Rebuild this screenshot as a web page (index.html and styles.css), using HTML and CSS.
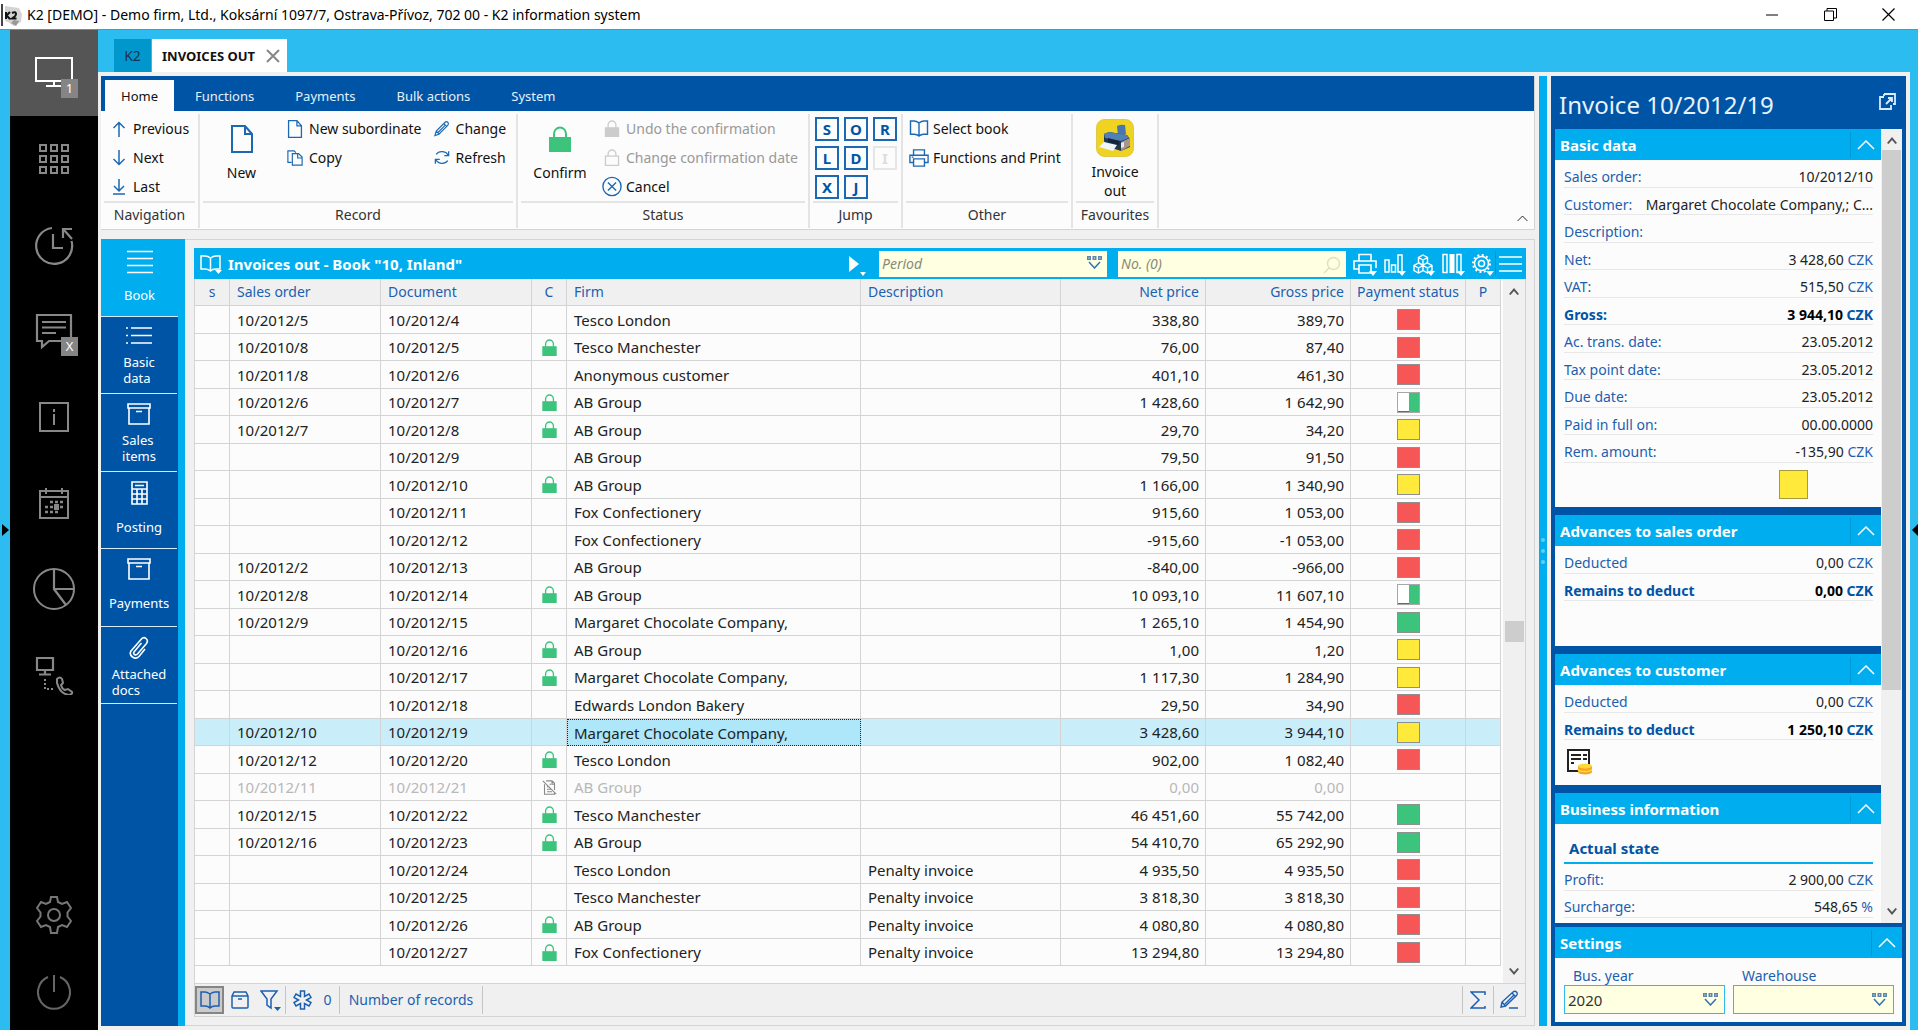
FILE: index.html
```html
<!DOCTYPE html>
<html lang="en">
<head>
<meta charset="utf-8">
<title>K2 information system</title>
<link rel="stylesheet" href="styles.css">
</head>
<body>
<svg class="defs" aria-hidden="true">
  <symbol id="lock" viewBox="0 0 22 26"><path d="M5 12V8a6 6.500 0 0 1 12 0v4" fill="none" stroke="currentColor" stroke-width="2"/><path d="M0 11h22v15H0z" fill="currentColor"/></symbol>
  <symbol id="lock-open" viewBox="0 0 22 26"><path d="M5 11V8a6 6.500 0 0 1 12 0v3M1 11h20v14H1z" fill="none" stroke="currentColor" stroke-width="2"/></symbol>
  <symbol id="doc" viewBox="0 0 22 28"><path d="M1 1h13l7 8v18H1zM14 1v8h7" fill="none" stroke="currentColor" stroke-width="2"/></symbol>
  <symbol id="copy" viewBox="0 0 18 18"><path d="M5 14H1V1h7l2 2M6 4h7l4 4v9H6zM12 4v5h5" fill="none" stroke="currentColor" stroke-width="1.300"/></symbol>
  <symbol id="pencil" viewBox="0 0 18 18"><path d="M1 17l1.500-5L12.500 2q1.500-1.500 3 0t0 3.500L5.500 15.500zM2.500 12l3.500 3.500M11 3.500l3.500 3.500M12.500 5.500l-8 8" fill="none" stroke="currentColor" stroke-width="1.300"/></symbol>
  <symbol id="refresh" viewBox="0 0 18 18"><path d="M16 7A7.500 6.500 0 0 0 2.500 5.500M16.500 2v5h-5M2 11a7.500 6.500 0 0 0 13.500 1.500M1.500 16v-5h5" fill="none" stroke="currentColor" stroke-width="1.400"/></symbol>
  <symbol id="cancel" viewBox="0 0 22 22"><circle cx="11" cy="11" r="10" fill="none" stroke="currentColor" stroke-width="1.500"/><path d="M6.500 6.500l9 9M15.500 6.500l-9 9" stroke="currentColor" stroke-width="1.500"/></symbol>
  <symbol id="book" viewBox="0 0 20 18"><path d="M10 3Q7 1 5 1H1v14h4q3 0 5 2 2-2 5-2h4V1h-4q-2 0-5 2v14" fill="none" stroke="currentColor" stroke-width="1.500"/></symbol>
  <symbol id="printer" viewBox="0 0 22 20"><path d="M5 7V1h12v6M5 15H1V7h20v8h-4M5 11h12v8H5zM3 9h2" fill="none" stroke="currentColor" stroke-width="1.500"/></symbol>
  <symbol id="box" viewBox="0 0 24 22"><path d="M1 1h22v4H1zM2 5h20v16H2zM9 8.500h6" fill="none" stroke="currentColor" stroke-width="1.600"/></symbol>
  <symbol id="chev-up" viewBox="0 0 18 10"><path d="M1 9l8-8 8 8" fill="none" stroke="currentColor" stroke-width="1.500"/></symbol>
  <symbol id="pick" viewBox="0 0 15 13"><path d="M0 0h4v4H0zM5.500 0h4v4h-4zM11 0h4v4h-4z" fill="#5d87b0"/><path d="M1.500 1.500h1v1h-1zM7 1.500h1v1H7zM12.500 1.500h1v1h-1z" fill="#ffffe1"/><path d="M2 6l5.500 6L13 6" fill="none" stroke="#2f72b5" stroke-width="1.500"/></symbol>
  <symbol id="scroll-up" viewBox="0 0 10 7"><path d="M0 6l5-6 5 6-1.500 1L5 3 1.500 7z" fill="#555"/></symbol>
  <symbol id="scroll-down" viewBox="0 0 10 7"><path d="M0 1l5 6 5-6-1.500-1L5 4 1.500 0z" fill="#555"/></symbol>
  <symbol id="storno" viewBox="0 0 18 18"><path d="M3 5v12h12v-3M5 1h7l3 3v8M12 1v4h3M6 8h3M6 11h5M6 14h6M9 5h2M1 1l16 16" fill="none" stroke="#888" stroke-width="1.300"/></symbol>
  <symbol id="part" viewBox="0 0 23 21"><path d="M0 0h23v21H0z" fill="#a8a8a8"/><path d="M1 1h11v18H1z" fill="#fff"/><path d="M1 19h11v1H1z" fill="#f03030"/><path d="M12 1h10v19H12z" fill="#3cc47c"/></symbol>
  <symbol id="gear" viewBox="0 0 36 38"><path d="M15 1h6l1 5 4 2 5-2 4 6-3.500 4.500v4L35 25l-4 6-5-2-4 2-1 6h-6l-1-6-4-2-5 2-4-6 3.500-4.500v-4L1 12l4-6 5 2 4-2z" fill="none" stroke="currentColor" stroke-width="2"/><circle cx="18" cy="19" r="6" fill="none" stroke="currentColor" stroke-width="2"/></symbol>
</svg>

<header class="titlebar">
  <svg class="app-icon" width="22" height="24" viewBox="0 0 22 24"><path d="M1 1v22" stroke="#444" stroke-width="2"/><path d="M4 3l14 2 3 6-1 8-7 4-6-4-3-1z" fill="#d4d4d4"/><path d="M13 17l5 1-3 5-5-3z" fill="#999"/><path d="M5 9v7M9 9l-3.500 3.500L9 16M11 10q4-2 4 1 0 2-4 4.500h4.500" fill="none" stroke="#111" stroke-width="2"/></svg>
  <span class="title">K2 [DEMO] - Demo firm, Ltd., Koksární 1097/7, Ostrava-Přívoz, 702 00 - K2 information system</span>
  <div class="win-buttons">
    <button aria-label="Minimize"><svg width="12" height="12" viewBox="0 0 12 12"><path d="M0 6h12" stroke="#000"/></svg></button>
    <button aria-label="Restore"><svg width="13" height="13" viewBox="0 0 13 13"><path d="M.5 3h9v9.500h-9zM3 3V.5h9.500v9.500H10" fill="none" stroke="#000"/></svg></button>
    <button aria-label="Close"><svg width="13" height="13" viewBox="0 0 13 13"><path d="M.5.5l12 12M12.500.5l-12 12" stroke="#000" stroke-width="1.200"/></svg></button>
  </div>
</header>

<div class="shell">
  <div class="edge"><svg width="7" height="12" viewBox="0 0 7 12"><path d="M0 0l7 6-7 6z"/></svg></div>
  <nav class="rail" aria-label="Modules">
    <button class="active" aria-label="Desktops"><svg width="44" height="40" viewBox="0 0 44 40"><path d="M4 5h36v23H4zM22 28v5M14 33h16" fill="none" stroke="#fff" stroke-width="2"/></svg><span class="badge">1</span></button>
    <button aria-label="Applications"><svg width="30" height="30" viewBox="0 0 30 30"><path d="M1 1h6v6H1zM12 1h6v6h-6zM23 1h6v6h-6zM1 12h6v6H1zM12 12h6v6h-6zM23 12h6v6h-6zM1 23h6v6H1zM12 23h6v6h-6zM23 23h6v6h-6z" fill="none" stroke="#888" stroke-width="2"/></svg></button>
    <button aria-label="History"><svg width="42" height="42" viewBox="0 0 42 42"><path d="M19 4a18 18 0 1 0 19.500 13M20 10v14h10M30 14V5h9M31 6l8 9" fill="none" stroke="#888" stroke-width="2.200"/></svg></button>
    <button aria-label="Messages"><svg width="44" height="42" viewBox="0 0 44 42"><path d="M5 5h34v26H17l-7 6v-6H5zM10 12h24M10 17.500h24M10 23h14" fill="none" stroke="#888" stroke-width="2.200"/></svg><span class="badge">X</span></button>
    <button aria-label="Information"><svg width="30" height="30" viewBox="0 0 30 30"><path d="M1 1h28v28H1zM15 7v3M15 12v11" fill="none" stroke="#888" stroke-width="2"/></svg></button>
    <button aria-label="Calendar"><svg width="30" height="32" viewBox="0 0 30 32"><path d="M1 4h28v27H1zM1 10h28M7 1v6M23 1v6" fill="none" stroke="#888" stroke-width="2"/><path d="M11 15h3M16 15h3M21 15h3M6 20h3M11 20h3M21 20h3M6 25h3M11 25h3M16 25h3" stroke="#888" stroke-width="2.500"/><path d="M15 17h5v6h-5z" fill="#888"/></svg></button>
    <button aria-label="Reports"><svg width="44" height="44" viewBox="0 0 44 44"><circle cx="22" cy="22" r="20" fill="none" stroke="#888" stroke-width="2"/><path d="M22 2v20h20M22 22l12 16" fill="none" stroke="#888" stroke-width="2.200"/></svg></button>
    <button aria-label="Remote support"><svg width="40" height="40" viewBox="0 0 40 40"><path d="M3 3h16v12H3zM11 15v4M5 19.500h12" fill="none" stroke="#888" stroke-width="2.200"/><path d="M11 24v10h10" fill="none" stroke="#888" stroke-width="2" stroke-dasharray="2 2"/><path d="M23 24q3-3 5 0l1 4-2 2q1 4 4 5l3-1 4 3q1 2-3 3-9-1-12-12z" fill="none" stroke="#888" stroke-width="2"/></svg></button>
    <span class="spacer"></span>
    <button class="low" aria-label="Settings"><svg width="36" height="38" color="#777"><use href="#gear"/></svg></button>
    <button class="low" aria-label="Exit"><svg width="34" height="36" viewBox="0 0 34 36"><path d="M11 3a16 16.500 0 1 0 12 0M17 1v17" fill="none" stroke="#666" stroke-width="2"/></svg></button>
  </nav>

  <div class="main">
    <div class="tabs">
      <a class="tab-k2" href="#k2">K2</a>
      <a class="tab-open" href="#invoices">INVOICES OUT <svg width="14" height="14" viewBox="0 0 14 14"><path d="M1 1l12 12M13 1L1 13" stroke="#888" stroke-width="2"/></svg></a>
    </div>
    <div class="workspace">
      <div class="left">
        <section class="ribbon">
          <div class="ribbon-tabs">
            <button class="on">Home</button><button>Functions</button><button>Payments</button><button>Bulk actions</button><button>System</button>
          </div>
          <div class="ribbon-body">
            <div class="group g-nav">
              <div class="tools"><div class="stack">
                <button><svg width="14" height="16" viewBox="0 0 14 16"><path d="M7 16V1.500M1.500 7L7 1.500 12.500 7" fill="none" stroke="currentColor" stroke-width="1.500"/></svg>Previous</button>
                <button><svg width="14" height="16" viewBox="0 0 14 16"><path d="M7 0v14.500M1.500 9L7 14.500 12.500 9" fill="none" stroke="currentColor" stroke-width="1.500"/></svg>Next</button>
                <button><svg width="14" height="16" viewBox="0 0 14 16"><path d="M7 0v12M2 7l5 5 5-5M1 15h12" fill="none" stroke="currentColor" stroke-width="1.500"/></svg>Last</button>
              </div></div>
              <p>Navigation</p>
            </div>
            <div class="group g-record">
              <div class="tools">
                <button class="big"><svg width="22" height="28"><use href="#doc"/></svg>New</button>
                <div class="stack">
                  <button><svg width="16" height="18"><use href="#doc"/></svg>New subordinate</button>
                  <button><svg width="16" height="18"><use href="#copy"/></svg>Copy</button>
                </div>
                <div class="stack">
                  <button><svg width="16" height="17"><use href="#pencil"/></svg>Change</button>
                  <button><svg width="16" height="17"><use href="#refresh"/></svg>Refresh</button>
                </div>
              </div>
              <p>Record</p>
            </div>
            <div class="group g-status">
              <div class="tools">
                <button class="big confirm"><svg width="22" height="26"><use href="#lock"/></svg>Confirm</button>
                <div class="stack">
                  <button disabled><svg width="20" height="17"><use href="#lock"/></svg>Undo the confirmation</button>
                  <button disabled><svg width="20" height="17"><use href="#lock-open"/></svg>Change confirmation date</button>
                  <button><svg width="20" height="21"><use href="#cancel"/></svg>Cancel</button>
                </div>
              </div>
              <p>Status</p>
            </div>
            <div class="group g-jump">
              <div class="tools jump"><button>S</button><button>O</button><button>R</button><button>L</button><button>D</button><button disabled>I</button><button>X</button><button>J</button></div>
              <p>Jump</p>
            </div>
            <div class="group g-other">
              <div class="tools"><div class="stack">
                <button><svg width="20" height="17"><use href="#book"/></svg>Select book</button>
                <button><svg width="20" height="20"><use href="#printer"/></svg>Functions and Print</button>
              </div></div>
              <p>Other</p>
            </div>
            <div class="group g-fav">
              <div class="tools">
                <button class="big"><svg width="38" height="38" viewBox="0 0 38 38"><rect x=".5" y=".5" width="37" height="37" rx="8" fill="#f0d321" stroke="#e0c84a"/><path d="M21 7q4-2 8-1l1 9-8 2z" fill="#4a76ad"/><path d="M8 15l5-2 18 3 3 4v8l-9 4-15-5-2-5z" fill="#22364f"/><path d="M8 15l5-2 18 3 2 3-8 3-16-3z" fill="#4f80b8"/><path d="M25 23l9-4v8l-9 5z" fill="#a8968a"/><path d="M25 24l3-1v5l-3 1z" fill="#e8e8e8"/><path d="M3 28l5-5 13 3-4 6z" fill="#eef6fb"/><path d="M12 19l11 3v4l-11-3z" fill="#16243a"/></svg><span>Invoice<br>out</span></button>
              </div>
              <p>Favourites</p>
            </div>
            <button class="collapse" aria-label="Collapse ribbon"><svg width="11" height="7"><use href="#chev-up"/></svg></button>
          </div>
        </section>

        <div class="lower">
          <nav class="pages">
            <button class="on"><svg width="26" height="24" viewBox="0 0 26 24"><path d="M0 1.500h26M0 8.500h26M0 15.500h26M0 22.500h26" stroke="#fff" stroke-width="1.500"/></svg><span>Book</span></button>
            <button><svg width="26" height="20" viewBox="0 0 26 20"><path d="M5 2h21M5 9.500h21M5 17h21M0 2h2M0 9.500h2M0 17h2" stroke="#fff" stroke-width="1.500"/></svg><span>Basic<br>data</span></button>
            <button><svg width="24" height="22"><use href="#box"/></svg><span>Sales<br>items</span></button>
            <button><svg width="17" height="24" viewBox="0 0 17 24"><path d="M1 1h15v22H1zM1 8h15M1 13h15M1 18h15M6 8v15M11 8v15M4 4.500h9" fill="none" stroke="#fff" stroke-width="1.600"/></svg><span>Posting</span></button>
            <button><svg width="24" height="22"><use href="#box"/></svg><span>Payments</span></button>
            <button><svg width="22" height="24" viewBox="0 0 22 24"><path d="M17 13l-6 7.500q-3 3-6.500.5t-1.500-6L13 3.500q2.500-3 5-1t.5 5L9.500 18q-1.500 1.500-3 .5T6 16l7.500-9" fill="none" stroke="#fff" stroke-width="1.600"/></svg><span>Attached<br>docs</span></button>
          </nav>

          <section class="grid">
            <div class="grid-head">
              <svg class="bookico" width="22" height="20" viewBox="0 0 22 20"><path d="M10.500 3Q8 1 5 1H1v13h4q3 0 5.500 2 2-2 5-2H20V1h-4q-3 0-5.500 2v13" fill="none" stroke="#fff" stroke-width="1.500"/><path d="M15 15h7l-3.500 4z" fill="#fff"/></svg>
              <h1>Invoices out - Book "10, Inland"</h1>
              <svg class="play" width="17" height="22" viewBox="0 0 17 22"><path d="M0 2l10 8-10 8zM11 18h6l-3 4z" fill="#fff"/></svg>
              <label class="field"><input type="text" placeholder="Period" aria-label="Period"><svg width="15" height="13"><use href="#pick"/></svg></label>
              <label class="field"><input type="search" placeholder="No. (0)" aria-label="Number"><svg width="18" height="18" viewBox="0 0 18 18"><circle cx="10.500" cy="7.500" r="6" fill="none" stroke="#e0dfc0" stroke-width="1.500"/><path d="M6 12l-5 5" stroke="#e0dfc0" stroke-width="1.500"/></svg></label>
              <div class="head-tools">
                <button aria-label="Print"><svg width="24" height="24" viewBox="0 0 24 24"><path d="M6 8V1.500h12V8M6 16H1V8h22v7M6 12h12v8H6z" fill="none" stroke="#fff" stroke-width="1.600"/><path d="M16 18h8l-4 5z" fill="#fff"/></svg></button>
                <button aria-label="Chart"><svg width="22" height="24" viewBox="0 0 22 24"><path d="M1 7h4v12H1zM7.500 12h4v7h-4zM14 2h4v17h-4z" fill="none" stroke="#fff" stroke-width="1.500"/><path d="M14 18h8l-4 5z" fill="#fff"/></svg></button>
                <button aria-label="Cubes"><svg width="22" height="24" viewBox="0 0 22 24"><path d="M10 2l4.500 2.500v5L10 12 5.500 9.500v-5zM5.500 4.500L10 7l4.500-2.500M10 7v5M5.500 10l4.500 2.500v5L5.500 20 1 17.500v-5zM1 12.500L5.500 15l4.500-2.500 4.500 2.500 4.500-2.500M5.500 15v5M14.500 10l4.500 2.500v5L14.500 20 10 17.500M14.500 15v5" fill="none" stroke="#fff" stroke-width="1.400"/><path d="M14 18h8l-4 5z" fill="#fff"/></svg></button>
                <button aria-label="Columns"><svg width="23" height="24" viewBox="0 0 23 24"><path d="M1 1.500h4v18H1zM15 1.500h4v18h-4z" fill="none" stroke="#fff" stroke-width="1.500"/><path d="M7.500 1h5v19h-5zM15 18h8l-4 5z" fill="#fff"/></svg></button>
                <button aria-label="Options"><svg width="23" height="24" viewBox="0 0 23 24"><circle cx="9.500" cy="10.500" r="7" fill="none" stroke="#fff" stroke-width="1.500"/><circle cx="9.500" cy="10.500" r="8.500" fill="none" stroke="#fff" stroke-width="2" stroke-dasharray="2 2.450"/><circle cx="9.500" cy="10.500" r="3" fill="none" stroke="#fff" stroke-width="1.500"/><path d="M14 18h8l-4 5z" fill="#fff"/></svg></button>
                <button class="menu" aria-label="Menu"><svg width="23" height="24" viewBox="0 0 23 24"><path d="M0 5h23M0 12h23M0 19h23" stroke="#fff" stroke-width="1.500"/></svg></button>
              </div>
            </div>

            <div class="grid-body">
              <div class="table-wrap">
              <table>
                <colgroup><col class="w-s"><col class="w-doc"><col class="w-doc"><col class="w-s"><col class="w-firm"><col><col class="w-num"><col class="w-num"><col class="w-pay"><col class="w-s"></colgroup>
                <thead><tr><th class="c">s</th><th>Sales order</th><th>Document</th><th class="c">C</th><th>Firm</th><th>Description</th><th class="r">Net price</th><th class="r">Gross price</th><th class="c">Payment status</th><th class="c">P</th></tr></thead>
                <tbody>
                <tr><td></td><td>10/2012/5</td><td>10/2012/4</td><td></td><td>Tesco London</td><td></td><td>338,80</td><td>389,70</td><td><i class="sq red"></i></td><td></td></tr>
                <tr><td></td><td>10/2010/8</td><td>10/2012/5</td><td><svg><use href="#lock"/></svg></td><td>Tesco Manchester</td><td></td><td>76,00</td><td>87,40</td><td><i class="sq red"></i></td><td></td></tr>
                <tr><td></td><td>10/2011/8</td><td>10/2012/6</td><td></td><td>Anonymous customer</td><td></td><td>401,10</td><td>461,30</td><td><i class="sq red"></i></td><td></td></tr>
                <tr><td></td><td>10/2012/6</td><td>10/2012/7</td><td><svg><use href="#lock"/></svg></td><td>AB Group</td><td></td><td>1 428,60</td><td>1 642,90</td><td><svg class="part"><use href="#part"/></svg></td><td></td></tr>
                <tr><td></td><td>10/2012/7</td><td>10/2012/8</td><td><svg><use href="#lock"/></svg></td><td>AB Group</td><td></td><td>29,70</td><td>34,20</td><td><i class="sq yellow"></i></td><td></td></tr>
                <tr><td></td><td></td><td>10/2012/9</td><td></td><td>AB Group</td><td></td><td>79,50</td><td>91,50</td><td><i class="sq red"></i></td><td></td></tr>
                <tr><td></td><td></td><td>10/2012/10</td><td><svg><use href="#lock"/></svg></td><td>AB Group</td><td></td><td>1 166,00</td><td>1 340,90</td><td><i class="sq yellow"></i></td><td></td></tr>
                <tr><td></td><td></td><td>10/2012/11</td><td></td><td>Fox Confectionery</td><td></td><td>915,60</td><td>1 053,00</td><td><i class="sq red"></i></td><td></td></tr>
                <tr><td></td><td></td><td>10/2012/12</td><td></td><td>Fox Confectionery</td><td></td><td>-915,60</td><td>-1 053,00</td><td><i class="sq red"></i></td><td></td></tr>
                <tr><td></td><td>10/2012/2</td><td>10/2012/13</td><td></td><td>AB Group</td><td></td><td>-840,00</td><td>-966,00</td><td><i class="sq red"></i></td><td></td></tr>
                <tr><td></td><td>10/2012/8</td><td>10/2012/14</td><td><svg><use href="#lock"/></svg></td><td>AB Group</td><td></td><td>10 093,10</td><td>11 607,10</td><td><svg class="part"><use href="#part"/></svg></td><td></td></tr>
                <tr><td></td><td>10/2012/9</td><td>10/2012/15</td><td></td><td>Margaret Chocolate Company,</td><td></td><td>1 265,10</td><td>1 454,90</td><td><i class="sq green"></i></td><td></td></tr>
                <tr><td></td><td></td><td>10/2012/16</td><td><svg><use href="#lock"/></svg></td><td>AB Group</td><td></td><td>1,00</td><td>1,20</td><td><i class="sq yellow"></i></td><td></td></tr>
                <tr><td></td><td></td><td>10/2012/17</td><td><svg><use href="#lock"/></svg></td><td>Margaret Chocolate Company,</td><td></td><td>1 117,30</td><td>1 284,90</td><td><i class="sq yellow"></i></td><td></td></tr>
                <tr><td></td><td></td><td>10/2012/18</td><td></td><td>Edwards London Bakery</td><td></td><td>29,50</td><td>34,90</td><td><i class="sq red"></i></td><td></td></tr>
                <tr class="selected"><td></td><td>10/2012/10</td><td>10/2012/19</td><td></td><td class="focus">Margaret Chocolate Company,</td><td></td><td>3 428,60</td><td>3 944,10</td><td><i class="sq yellow"></i></td><td></td></tr>
                <tr><td></td><td>10/2012/12</td><td>10/2012/20</td><td><svg><use href="#lock"/></svg></td><td>Tesco London</td><td></td><td>902,00</td><td>1 082,40</td><td><i class="sq red"></i></td><td></td></tr>
                <tr class="void"><td></td><td>10/2012/11</td><td>10/2012/21</td><td><svg><use href="#storno"/></svg></td><td>AB Group</td><td></td><td>0,00</td><td>0,00</td><td></td><td></td></tr>
                <tr><td></td><td>10/2012/15</td><td>10/2012/22</td><td><svg><use href="#lock"/></svg></td><td>Tesco Manchester</td><td></td><td>46 451,60</td><td>55 742,00</td><td><i class="sq green"></i></td><td></td></tr>
                <tr><td></td><td>10/2012/16</td><td>10/2012/23</td><td><svg><use href="#lock"/></svg></td><td>AB Group</td><td></td><td>54 410,70</td><td>65 292,90</td><td><i class="sq green"></i></td><td></td></tr>
                <tr><td></td><td></td><td>10/2012/24</td><td></td><td>Tesco London</td><td>Penalty invoice</td><td>4 935,50</td><td>4 935,50</td><td><i class="sq red"></i></td><td></td></tr>
                <tr><td></td><td></td><td>10/2012/25</td><td></td><td>Tesco Manchester</td><td>Penalty invoice</td><td>3 818,30</td><td>3 818,30</td><td><i class="sq red"></i></td><td></td></tr>
                <tr><td></td><td></td><td>10/2012/26</td><td><svg><use href="#lock"/></svg></td><td>AB Group</td><td>Penalty invoice</td><td>4 080,80</td><td>4 080,80</td><td><i class="sq red"></i></td><td></td></tr>
                <tr><td></td><td></td><td>10/2012/27</td><td><svg><use href="#lock"/></svg></td><td>Fox Confectionery</td><td>Penalty invoice</td><td>13 294,80</td><td>13 294,80</td><td><i class="sq red"></i></td><td></td></tr>
                </tbody>
              </table>
              </div>
              <div class="scroll"><svg width="10" height="7"><use href="#scroll-up"/></svg><i class="thumb"></i><svg width="10" height="7"><use href="#scroll-down"/></svg></div>
            </div>

            <footer class="statusbar">
              <button class="pressed" aria-label="Book view"><svg width="20" height="18"><use href="#book"/></svg></button>
              <button aria-label="Container"><svg width="18" height="18" viewBox="0 0 18 18"><path d="M1 5l2-4h12l2 4v11q0 1-1 1H2q-1 0-1-1zM1 5h16M7 8h4" fill="none" stroke="currentColor" stroke-width="1.500"/></svg></button>
              <button class="ruled" aria-label="Filter"><svg width="21" height="22" viewBox="0 0 21 22"><path d="M1 2h16l-6 8v9l-4-3v-6z" fill="none" stroke="currentColor" stroke-width="1.500"/><path d="M14 18h7l-3.500 4z" fill="currentColor"/></svg></button>
              <button class="stars ruled"><svg width="19" height="20" viewBox="0 0 19 20"><path d="M7.500 1h4v5.500L16 4l2 3.500-4.500 2.500 4.500 2.500L16 16l-4.500-2.500V19h-4v-5.500L3 16l-2-3.500L5.500 10 1 7.500 3 4l4.500 2.500z" fill="none" stroke="currentColor" stroke-width="1.500"/></svg>0</button>
              <button class="records ruled">Number of records</button>
              <span class="spacer ruled"></span>
              <button class="ruled" aria-label="Sum"><svg width="16" height="18" viewBox="0 0 16 18"><path d="M15 4V1H1l8 8-8 8h14v-2" fill="none" stroke="currentColor" stroke-width="1.500"/></svg></button>
              <button aria-label="Edit"><svg width="19" height="20" viewBox="0 0 19 20"><path d="M1 17l1-5L13 2q2-1.500 3.500 0t0 3.500L5.500 16zM2 12l3.500 4M12 3l4 4M14 5l-9 9M9 18h9" fill="none" stroke="currentColor" stroke-width="1.400"/></svg></button>
            </footer>
          </section>
        </div>
      </div>

      <div class="splitter"><i></i><i></i><i></i></div>

      <aside class="preview">
        <div class="preview-title"><h2>Invoice 10/2012/19</h2><a href="#open" aria-label="Open in window"><svg width="17" height="17" viewBox="0 0 17 17"><path d="M5 4H1v12h11v-4M5 1h11v10h-2M5 1v2M7 11l6-6M9 5h4v4" fill="none" stroke="#dcecff" stroke-width="1.800"/></svg></a></div>
        <div class="preview-body">
          <div class="cards">
            <section class="card basic">
              <h3>Basic data<button aria-label="Collapse"><svg width="18" height="10"><use href="#chev-up"/></svg></button></h3>
              <dl>
                <div><dt>Sales order:</dt><dd>10/2012/10</dd></div>
                <div><dt>Customer:</dt><dd>Margaret Chocolate Company,; C...</dd></div>
                <div><dt>Description:</dt><dd></dd></div>
                <div><dt>Net:</dt><dd>3 428,60 <em>CZK</em></dd></div>
                <div><dt>VAT:</dt><dd>515,50 <em>CZK</em></dd></div>
                <div class="strong"><dt>Gross:</dt><dd>3 944,10 <em>CZK</em></dd></div>
                <div><dt>Ac. trans. date:</dt><dd>23.05.2012</dd></div>
                <div><dt>Tax point date:</dt><dd>23.05.2012</dd></div>
                <div><dt>Due date:</dt><dd>23.05.2012</dd></div>
                <div><dt>Paid in full on:</dt><dd>00.00.0000</dd></div>
                <div><dt>Rem. amount:</dt><dd>-135,90 <em>CZK</em></dd></div>
              </dl>
              <i class="status-square"></i>
            </section>
            <section class="card advance">
              <h3>Advances to sales order<button aria-label="Collapse"><svg width="18" height="10"><use href="#chev-up"/></svg></button></h3>
              <dl>
                <div><dt>Deducted</dt><dd>0,00 <em>CZK</em></dd></div>
                <div class="strong"><dt>Remains to deduct</dt><dd>0,00 <em>CZK</em></dd></div>
              </dl>
            </section>
            <section class="card advance">
              <h3>Advances to customer<button aria-label="Collapse"><svg width="18" height="10"><use href="#chev-up"/></svg></button></h3>
              <dl>
                <div><dt>Deducted</dt><dd>0,00 <em>CZK</em></dd></div>
                <div class="strong"><dt>Remains to deduct</dt><dd>1 250,10 <em>CZK</em></dd></div>
              </dl>
              <svg class="coins" width="25" height="26" viewBox="0 0 25 26"><path d="M1 1h21v21H1z" fill="#fff" stroke="#222" stroke-width="2"/><path d="M4 6h10M16 6h4M4 10h10M16 10h4M4 14h3" stroke="#222" stroke-width="2"/><path d="M11 17v6a7 2.500 0 0 0 14 0v-6z" fill="#f5a623"/><ellipse cx="18" cy="17" rx="7" ry="2.500" fill="#ffd83a"/><path d="M11 20a7 2.500 0 0 0 14 0" fill="none" stroke="#ffd83a" stroke-width="1.500"/></svg>
            </section>
            <section class="card business">
              <h3>Business information<button aria-label="Collapse"><svg width="18" height="10"><use href="#chev-up"/></svg></button></h3>
              <h4>Actual state</h4>
              <dl>
                <div><dt>Profit:</dt><dd>2 900,00 <em>CZK</em></dd></div>
                <div><dt>Surcharge:</dt><dd>548,65 <em>%</em></dd></div>
              </dl>
            </section>
          </div>
          <div class="scroll side"><svg width="10" height="7"><use href="#scroll-up"/></svg><i class="thumb"></i><svg width="10" height="7"><use href="#scroll-down"/></svg></div>
        </div>
        <section class="card settings">
          <h3>Settings<button aria-label="Collapse"><svg width="18" height="10"><use href="#chev-up"/></svg></button></h3>
          <div class="settings-fields">
            <div><label for="year">Bus. year</label><div class="combo"><input id="year" type="text" value="2020"><svg width="15" height="13"><use href="#pick"/></svg></div></div>
            <div><label for="wh">Warehouse</label><div class="combo"><input id="wh" type="text"><svg width="15" height="13"><use href="#pick"/></svg></div></div>
          </div>
        </section>
      </aside>
    </div>
  </div>
  <div class="edge right"><svg width="6" height="12" viewBox="0 0 6 12"><path d="M6 0L0 6l6 6z"/></svg></div>
</div>
</body>
</html>
```

FILE: styles.css
```css
:root {
  --navy: #0054a6;
  --cyan: #00aeef;
  --sky: #2cbcf0;
  --link: #1c5fb0;
  --paper: #fcfcfc;
  --line: #d4d4d4;
}
* { box-sizing: border-box; }
body {
  margin: 0;
  height: 100vh;
  display: flex;
  flex-direction: column;
  overflow: hidden;
  font: 14px/20px "Noto Sans", "Open Sans", sans-serif;
  color: #222;
}
h1, h2, h3, h4, p, dl, dd { margin: 0; }
button {
  border: 0;
  padding: 0;
  background: none;
  color: inherit;
  font: inherit;
  white-space: nowrap;
}
a { color: inherit; text-decoration: none; }
svg { flex: none; display: block; }
em { font-style: normal; }
.defs { position: absolute; width: 0; height: 0; }
.spacer { flex: 1; }

/* window title */
.titlebar {
  flex: none;
  height: 29px;
  display: flex;
  align-items: center;
  background: #fff;
  color: #000;
}
.app-icon { margin: 0 4px 0 1px; }
.title { flex: 1; font-size: 14px; }
.win-buttons { display: flex; padding-right: 1px; }
.win-buttons button { width: 58px; height: 29px; display: grid; place-items: center; }

.shell { flex: 1; min-height: 0; display: flex; background: var(--sky); border-top: 1px solid #2aa6d2; }
.edge { width: 10px; display: flex; align-items: center; justify-content: center; }
.edge.right { width: 8px; justify-content: flex-end; }

/* module rail */
.rail { width: 88px; display: flex; flex-direction: column; background: #000; }
.rail button { position: relative; height: 86px; display: grid; place-items: center; }
.rail .active { background: #555; }
.rail .low { height: 77px; }
.badge {
  position: absolute;
  left: 51px;
  top: 49px;
  width: 17px;
  height: 19px;
  background: #858585;
  color: #fff;
  font-size: 13px;
  line-height: 19px;
}

.main { flex: 1; min-width: 0; display: flex; flex-direction: column; }
.tabs { flex: none; height: 42px; display: flex; align-items: flex-end; padding-left: 16px; gap: 1px; }
.tabs a { height: 33px; display: flex; align-items: center; justify-content: center; }
.tab-k2 { width: 37px; background: #0098cc; color: #1a3050; }
.tab-open { padding: 0 7px 0 10px; gap: 11px; background: #fff; color: #111; font-weight: bold; font-size: 13px; }
.workspace {
  flex: 1;
  min-height: 0;
  display: flex;
  gap: 4px;
  padding: 4px 4px 4px 3px;
  background: #f0f0f0;
}
.left { flex: 1; min-width: 0; display: flex; flex-direction: column; gap: 9px; }

/* ribbon */
.ribbon { border-bottom: 1px solid var(--line); border-right: 1px solid var(--line); }
.ribbon-tabs { height: 35px; padding: 4px 0 0 4px; display: flex; background: var(--navy); color: #e6f0fa; font-size: 13px; }
.ribbon-tabs button { height: 31px; padding: 0 20px; margin-right: 1px; }
.ribbon-tabs .on { padding: 0 16px; background: var(--paper); color: #111; }
.ribbon-body { display: flex; padding: 3px 0 1px; background: var(--paper); color: #111; }
.group { flex: none; display: flex; flex-direction: column; padding: 0 3px; border-right: 2px solid #e4e4e4; }
.group p { border-top: 2px solid #e4e4e4; padding: 2px 0 3px; text-align: center; color: #333; }
.tools { height: 87px; display: flex; }
.tools svg { color: #1b68b3; }
.stack { display: flex; flex-direction: column; }
.stack button { height: 29px; display: flex; align-items: center; gap: 6px; }
.stack button:disabled { color: #999; }
.stack button:disabled svg { color: #ccc; }
.big { display: flex; flex-direction: column; align-items: center; line-height: 19px; }
.big svg { margin: 11px 0 10px; }
.big.confirm svg { color: #3cc47c; margin: 12px 0 11px; }
.g-nav { width: 99px; }
.g-nav .tools { padding-left: 8px; }
.g-nav .stack button { gap: 7px; }
.g-record { width: 318px; }
.g-record .big { width: 77px; }
.g-record .stack { margin-left: 7px; }
.g-record .stack + .stack { margin-left: 12px; }
.g-status { width: 292px; }
.g-status .big { width: 78px; }
.g-status .stack { margin-left: 3px; }
.g-status .stack button { gap: 4px; }
.g-jump { width: 93px; }
.jump { display: grid; grid-template-columns: repeat(3, 24px); grid-auto-rows: 24px; gap: 5px; align-content: start; padding: 3px 2px; }
.jump button { border: 2px solid #1b68b3; color: #0054a6; font-weight: bold; font-size: 15px; line-height: 20px; }
.jump button:disabled { border-color: #e6e6e6; color: #ddd; }
.g-other { width: 170px; }
.g-other .tools { padding-left: 3px; }
.g-other .stack button { gap: 4px; }
.g-fav { width: 86px; }
.g-fav .tools { justify-content: center; }
.g-fav .big svg { margin: 5px 0; }
.collapse { margin: auto 6px 6px auto; }

/* lower frame */
.lower {
  flex: 1;
  min-height: 0;
  display: flex;
  gap: 9px;
  padding: 0 8px 8px 0;
  border: 1px solid var(--line);
  border-left: 0;
}
.pages {
  width: 84px;
  margin: -1px 0 -9px;
  padding-right: 7px;
  background: linear-gradient(to left, var(--cyan) 7px, var(--navy) 7px);
  color: #fff;
  font-size: 13px;
}
.pages button {
  width: 76px;
  height: 78px;
  display: flex;
  flex-direction: column;
  align-items: center;
  border-bottom: 1px solid #d6ecfa;
  padding: 9px 0 0;
  line-height: 16px;
}
.pages button:nth-child(even) { height: 77px; }
.pages span { margin: auto 0; text-align: left; }
.pages .on { width: 77px; background: var(--cyan); padding-top: 11px; }

/* data grid */
.grid { flex: 1; min-width: 0; margin-top: 8px; display: flex; flex-direction: column; border: 1px solid var(--line); border-top: 0; }
.grid-head { flex: none; height: 31px; margin: 0 -1px; display: flex; align-items: center; background: var(--cyan); }
.bookico { margin: 3px 6px 0 6px; }
.grid-head h1 { flex: 1; color: #fff; font-size: 15px; line-height: 24px; }
.play { margin: 3px 13px 0 0; }
.field { position: relative; width: 228px; height: 26px; margin-right: 11px; }
.field + .field { margin-right: 7px; }
.field input { width: 100%; height: 100%; border: 0; padding: 0 3px; background: #ffffe1; font: italic 14px "Noto Sans", sans-serif; }
.field input::placeholder { color: #8a8a7a; opacity: 1; }
.field svg { position: absolute; right: 5px; top: 5px; }
.head-tools { display: flex; gap: 7px; padding-right: 4px; }
.head-tools button { padding-top: 2px; }
.head-tools .menu { padding: 0 0 0 3px; margin-left: -7px; border-left: 1px solid #0098d4; }
.grid-body { flex: 1; min-height: 0; display: flex; background: var(--paper); }
.table-wrap { flex: 1; min-width: 0; padding-right: 2px; }
table { width: 100%; table-layout: fixed; border-collapse: separate; border-spacing: 0; }
th, td {
  padding: 0 6px 0 7px;
  border-right: 1px solid var(--line);
  border-bottom: 1px solid var(--line);
  text-align: left;
  white-space: nowrap;
  overflow: hidden;
}
th { height: 27px; background: #f0f0f0; color: var(--link); font-weight: normal; font-size: 14px; }
th.c { padding: 0; text-align: center; }
th.r, td:nth-child(7), td:nth-child(8) { text-align: right; }
td { height: 28px; font-size: 15px; }
tr:nth-child(even) td { height: 27px; }
td svg { width: 15px; height: 17px; margin: 0 auto; color: #3cc47c; }
td:nth-child(4) { padding: 0; }
.sq, .part { display: block; width: 23px; height: 21px; margin: 0 auto; }
.sq { border: 1px solid #8f8f8f; }
.red { background: #f65656; }
.yellow { background: #ffe93b; }
.green { background: #3cc47c; }
.w-s { width: 35px; }
.w-doc { width: 151px; }
.w-firm { width: 294px; }
.w-num { width: 145px; }
.w-pay { width: 115px; }
.selected td { background: #c9eefa; }
.selected .focus { background: #aee6fa; border: 1px dotted #222; padding: 0 6px; }
.void td { color: #b8b8b8; }

.scroll { width: 22px; display: flex; flex-direction: column; align-items: center; justify-content: space-between; padding: 9px 0 8px; background: #f0f0f0; }
.thumb { width: 19px; height: 21px; background: #cdcdcd; }

.statusbar { flex: none; height: 33px; display: flex; align-items: center; border-top: 1px solid var(--line); color: var(--link); }
.statusbar button, .statusbar .spacer { height: 28px; display: flex; align-items: center; justify-content: center; }
.statusbar button { width: 31px; }
.statusbar .pressed { width: 29px; border: 2px solid #858585; background: #cbcbcb; }
.statusbar .ruled { border-right: 1px solid #c4c4c4; }
.statusbar .stars { width: 54px; gap: 11px; }
.statusbar .records { width: 143px; }

.splitter { width: 8px; display: flex; flex-direction: column; align-items: center; justify-content: center; gap: 7px; background: var(--cyan); }
.splitter i { width: 4px; height: 4px; border-radius: 2px; background: #66cdf5; }

/* preview panel */
.preview { width: 355px; padding: 0 4px 4px; display: flex; flex-direction: column; gap: 4px; background: var(--navy); }
.preview-title { flex: none; height: 49px; display: flex; align-items: center; justify-content: space-between; padding: 9px 6px 0 4px; color: #e8f2fc; }
.preview-title h2 { font-weight: normal; font-size: 24px; line-height: 32px; }
.preview-title a { padding-bottom: 8px; }
.preview-body { flex: 1; min-height: 0; display: flex; }
.cards { flex: 1; min-width: 0; display: flex; flex-direction: column; gap: 8px; overflow: hidden; }
.card { flex: none; background: var(--paper); }
.card h3 { height: 31px; display: flex; align-items: center; justify-content: space-between; padding-left: 5px; background: var(--cyan); color: #fff; font-size: 15px; }
.card h3 button { width: 31px; height: 26px; display: grid; place-items: center; border-left: 1px solid #0098d4; }
.basic { height: 378px; }
.advance { height: 131px; }
.card dl { padding: 0 8px 0 9px; }
.card dl div { height: 28px; display: flex; align-items: center; gap: 8px; border-bottom: 1px solid #e8e8e8; padding-top: 7px; }
.card dl div:nth-child(even) { height: 27px; }
dt, dd em { color: var(--link); }
dd { flex: 1; min-width: 0; white-space: nowrap; text-align: right; }
.strong, .strong em, .strong dt { font-weight: bold; }
.strong em, .strong dt { color: var(--navy); }
.strong dd { color: #000; }
.status-square { display: block; width: 29px; height: 29px; margin: 7px 0 0 224px; border: 1px solid #a59b3a; background: #ffe93b; }
.coins { margin: 9px 0 0 12px; }
.card.business { flex: 1; }
.business h4 { margin: 0 8px 0 9px; padding: 14px 5px 4px; border-bottom: 2px solid var(--cyan); color: var(--navy); font-size: 15px; line-height: 20px; }
.card.business dl div { height: 27px; padding-top: 5px; }
.scroll.side { width: 21px; justify-content: flex-start; padding-top: 8px; }
.side .thumb { flex: 1; margin: 6px 0 218px; }
.settings { padding-bottom: 8px; }
.settings-fields { display: flex; gap: 8px; padding: 9px 8px 0 9px; }
.settings-fields > div { flex: 1; }
.settings-fields label { display: block; padding-left: 9px; line-height: 18px; color: var(--link); }
.combo { position: relative; }
.combo input { width: 100%; height: 29px; border: 1px solid var(--sky); padding: 0 3px; background: #ffffe1; font: 15px "Noto Sans", sans-serif; color: #333; }
.combo svg { position: absolute; right: 7px; top: 8px; }
```
